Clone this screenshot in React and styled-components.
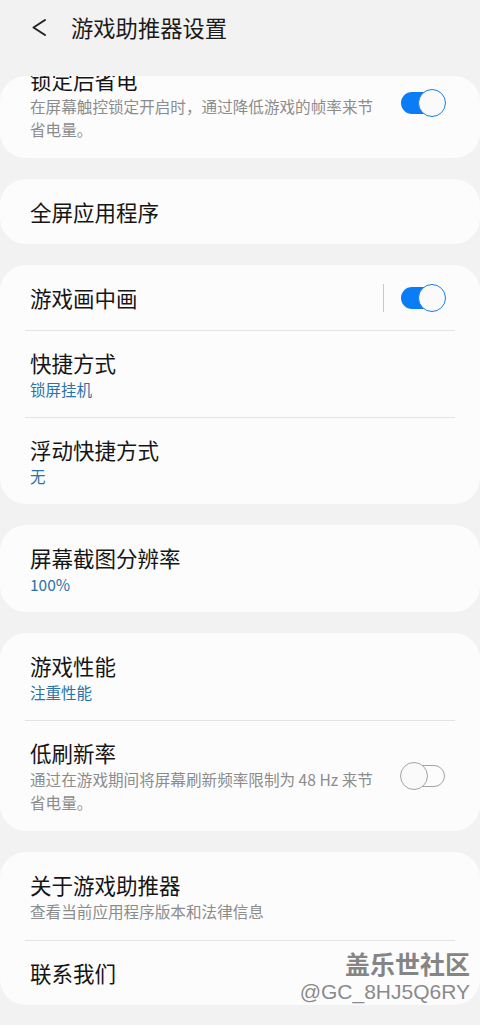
import React, { useLayoutEffect, useRef } from "react";
import styled, { createGlobalStyle } from "styled-components";

const GlobalStyle = createGlobalStyle`
  html, body {
    margin: 0;
    padding: 0;
    background: #f2f2f2;
  }
  body {
    font-family: "Noto Sans CJK SC", "Noto Sans", sans-serif;
    color: #1a1a1a;
  }
`;

const sections = [
  [
    {
      title: "锁定后省电",
      desc: "在屏幕触控锁定开启时，通过降低游戏的帧率来节省电量。",
      toggle: true,
    },
  ],
  [{ title: "全屏应用程序" }],
  [
    { title: "游戏画中画", toggle: true, split: true },
    { title: "快捷方式", value: "锁屏挂机" },
    { title: "浮动快捷方式", value: "无" },
  ],
  [{ title: "屏幕截图分辨率", value: "100%" }],
  [
    { title: "游戏性能", value: "注重性能" },
    {
      title: "低刷新率",
      desc: "通过在游戏期间将屏幕刷新频率限制为 48 Hz 来节省电量。",
      toggle: false,
    },
  ],
  [
    { title: "关于游戏助推器", desc: "查看当前应用程序版本和法律信息" },
    { title: "联系我们" },
  ],
];

const App = () => {
  const listRef = useRef(null);

  // the list is scrolled a little, so the first card slides under the header
  useLayoutEffect(() => {
    if (listRef.current) listRef.current.scrollTop = 29;
  }, []);

  return (
    <Page>
      <GlobalStyle />
      <Header>
        <BackButton>
          <svg width="24" height="24" viewBox="0 0 24 24">
            <polyline
              points="18,5 6.5,12.5 18,20"
              fill="none"
              stroke="#222"
              strokeWidth="2"
              strokeLinecap="round"
              strokeLinejoin="round"
            />
          </svg>
        </BackButton>
        <HeaderTitle>游戏助推器设置</HeaderTitle>
      </Header>

      <List ref={listRef}>
        {sections.map((rows, i) => (
          <Card key={i}>
            {rows.map((row, j) => (
              <Row key={row.title} $divider={j > 0}>
                <TextBlock>
                  <Title>{row.title}</Title>
                  {row.value && <Value>{row.value}</Value>}
                  {row.desc && <Desc>{row.desc}</Desc>}
                </TextBlock>
                {row.split && <Split />}
                {row.toggle !== undefined && (
                  <Switch>
                    <Track $on={row.toggle} />
                    <Thumb $on={row.toggle} />
                  </Switch>
                )}
              </Row>
            ))}
          </Card>
        ))}
      </List>

      <Watermark>
        <MarkName>盖乐世社区</MarkName>
        <MarkUser>@GC_8HJ5Q6RY</MarkUser>
      </Watermark>
    </Page>
  );
};

const Page = styled.div`
  position: relative;
  width: 480px;
  height: 1025px;
  overflow: hidden;
  display: flex;
  flex-direction: column;
  background: #f2f2f2;
`;

const Header = styled.div`
  display: flex;
  align-items: center;
  height: 54px;
  padding-left: 27px;
  flex-shrink: 0;
`;

const BackButton = styled.div`
  display: flex;
  width: 24px;
  height: 24px;
  margin-right: 20px;
`;

const HeaderTitle = styled.div`
  font-size: 22.3px;
  line-height: 30px;
  color: #1a1a1a;
`;

const List = styled.div`
  margin-top: 22px;
  flex: 1;
  overflow: hidden;
  border-radius: 26px 26px 0 0;
  display: flex;
  flex-direction: column;
  gap: 21px;
  padding-bottom: 60px;
`;

const Card = styled.div`
  flex-shrink: 0;
  background: #fcfcfc;
  border-radius: 26px;
  display: flex;
  flex-direction: column;
`;

const Row = styled.div`
  display: flex;
  align-items: center;
  margin: 0 ${(p) => (p.$divider ? "25px" : "0")};
  padding: ${(p) => (p.$divider ? "17px 9px 17px 5px" : "18px 34px 17px 30px")};
  border-top: ${(p) => (p.$divider ? "1px solid #e4e4e4" : "none")};
`;

const TextBlock = styled.div`
  flex: 1;
  min-width: 0;
  display: flex;
  flex-direction: column;
  padding-right: 20px;
`;

const Title = styled.div`
  font-size: 21.5px;
  line-height: 30px;
  color: #151515;
`;

const Value = styled.div`
  font-size: 15.5px;
  line-height: 22px;
  color: #2a72a8;
`;

const Desc = styled.div`
  font-size: 15.6px;
  line-height: 23px;
  color: #8c8c8c;
`;

const Split = styled.div`
  width: 1px;
  height: 28px;
  background: #c8c8c8;
  margin-right: 16px;
`;

const Switch = styled.div`
  position: relative;
  flex-shrink: 0;
  width: 46px;
  height: 28px;
`;

const Track = styled.div`
  position: absolute;
  left: 1px;
  right: 1px;
  top: 3px;
  height: 22px;
  box-sizing: border-box;
  border-radius: 11px;
  background: ${(p) => (p.$on ? "#0a7cf5" : "transparent")};
  border: ${(p) => (p.$on ? "none" : "1.5px solid #a3a3a3")};
`;

const Thumb = styled.div`
  position: absolute;
  top: 0;
  ${(p) => (p.$on ? "right: 0;" : "left: 0;")}
  width: 28px;
  height: 28px;
  box-sizing: border-box;
  border-radius: 50%;
  background: #fafafa;
  border: 1.5px solid ${(p) => (p.$on ? "#1a7ee8" : "#a3a3a3")};
`;

const Watermark = styled.div`
  position: absolute;
  right: 10px;
  bottom: 20px;
  display: flex;
  flex-direction: column;
  align-items: flex-end;
  pointer-events: none;
`;

const MarkName = styled.div`
  font-size: 25px;
  line-height: 32px;
  font-weight: 700;
  color: #858585;
  text-shadow: 0 0 2px #fff, 0 0 2px #fff;
`;

const MarkUser = styled.div`
  font-family: "Liberation Sans", sans-serif;
  font-size: 21px;
  line-height: 26px;
  color: #8a8a8a;
  text-shadow: 0 0 2px #fff, 0 0 2px #fff;
`;

export default App;
